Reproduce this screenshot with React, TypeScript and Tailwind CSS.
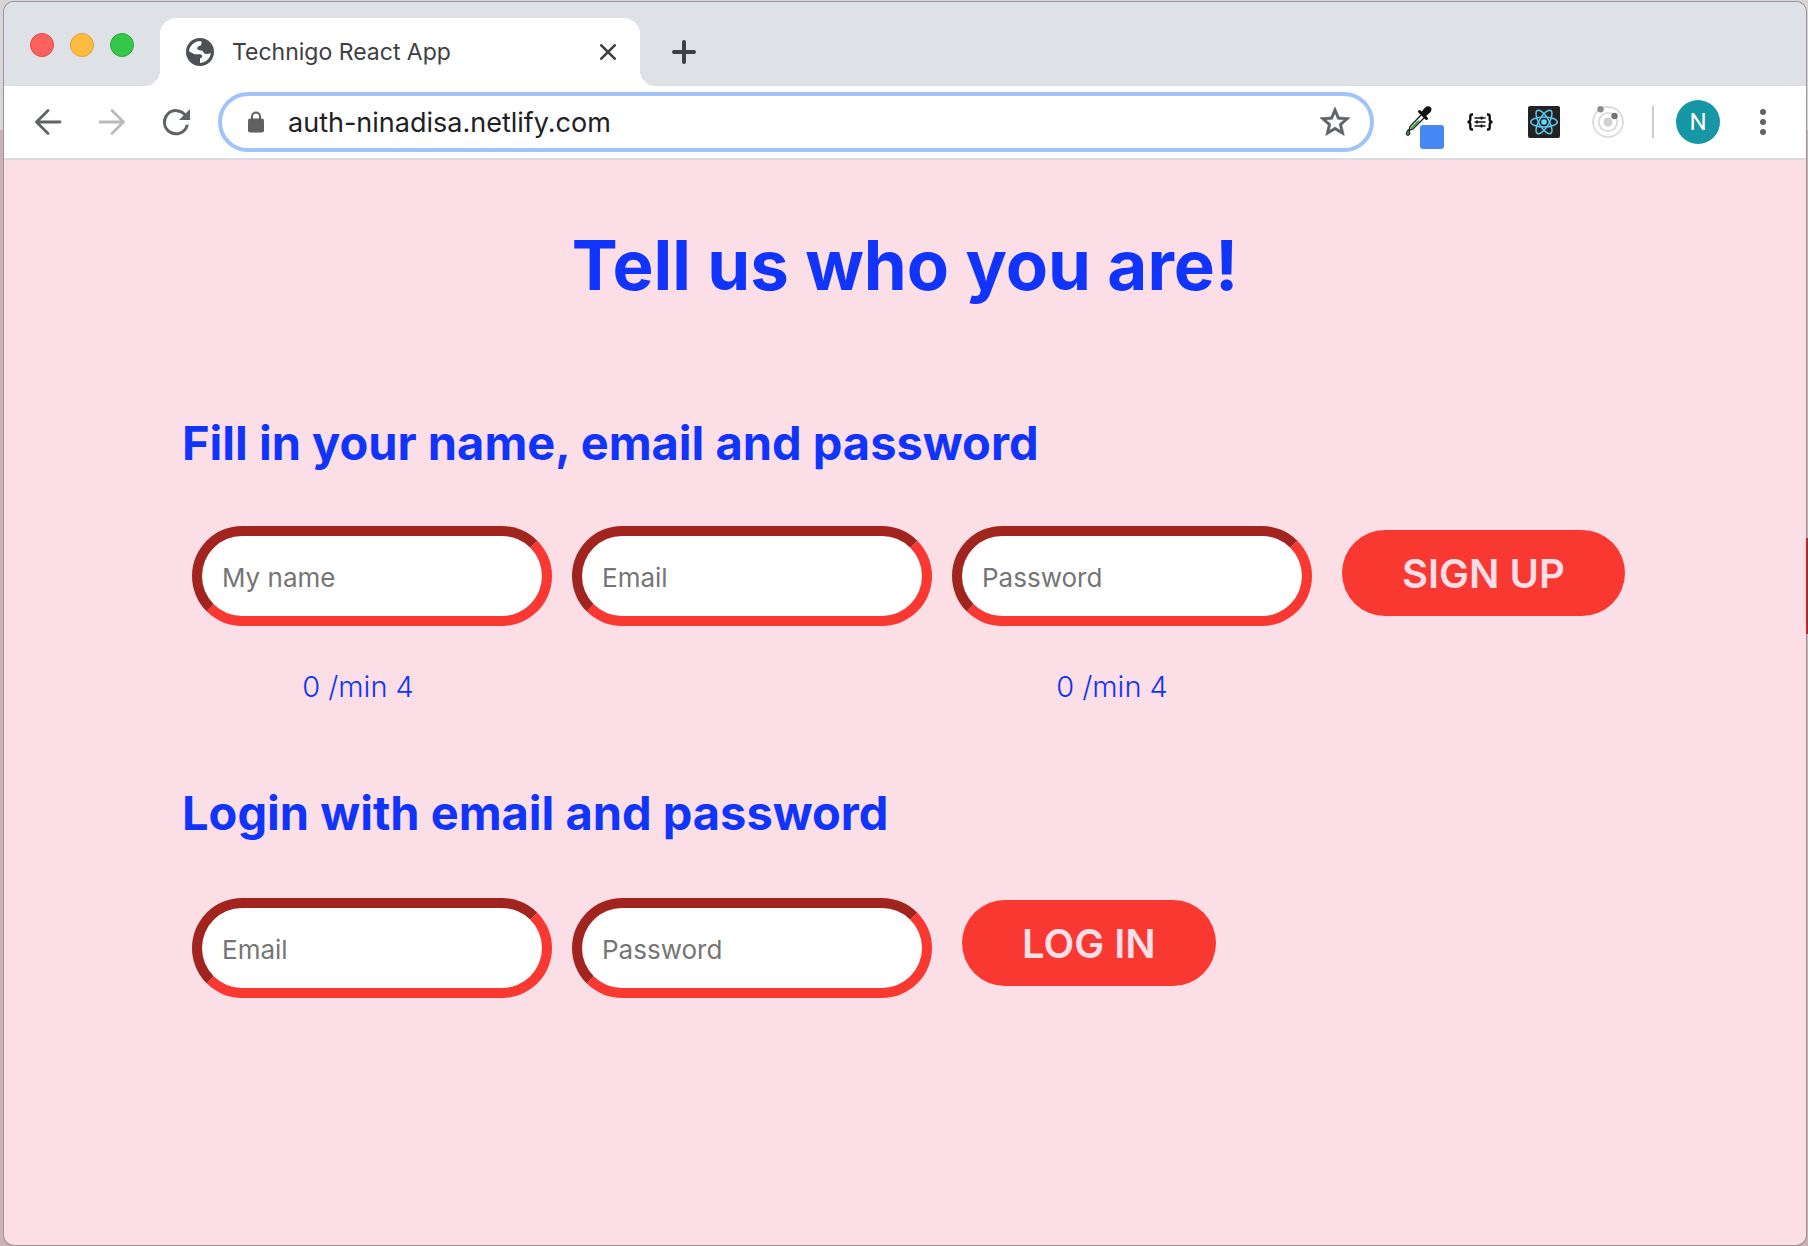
import React from "react";

const font = "font-['Inter','Noto_Sans',sans-serif]";

function Globe() {
  return (
    <svg viewBox="0 0 28 28" className="size-7 shrink-0" aria-hidden="true">
      <circle cx="14" cy="14" r="14" fill="#4d5156" />
      <path
        fill="#fff"
        d="M3.200 11.500Q5 5.500 11.500 3.200H15.500V5.500Q15.300 8 12.800 8.200 11 8.500 11.200 10.500 11.500 12 13.500 12.300 17 12.200 17.500 14.500 18.500 16.200 21 16 23.500 15.800 24.900 15 24 21.500 17.500 24.300L14 24.900V20.500Q16 20 16.300 18.200 16.200 16.200 14 16.200H8.500L3.200 13.500Z"
      />
    </svg>
  );
}

function ReactLogo() {
  return (
    <svg viewBox="0 0 32 32" className="size-8" aria-hidden="true">
      <rect width="32" height="32" rx="2" fill="#222" />
      <circle cx="16" cy="16" r="2.8" fill="#61dafb" />
      <g fill="none" stroke="#5cc8ee" strokeWidth="1.5">
        <ellipse cx="16" cy="16" rx="13.3" ry="5" />
        <ellipse cx="16" cy="16" rx="13.3" ry="5" transform="rotate(60 16 16)" />
        <ellipse cx="16" cy="16" rx="13.3" ry="5" transform="rotate(120 16 16)" />
      </g>
    </svg>
  );
}

function Dropper() {
  return (
    <svg viewBox="0 0 40 44" className="h-11 w-10" aria-hidden="true">
      <path d="M18 9 6 21.500 5 25.500 9 24 21 12Z" fill="#f4f4f4" stroke="#222" strokeWidth="1.400" />
      <path d="M14 15.500 7 22.500 6.500 24.500 9 23.500 16.500 16Z" fill="#3f9a48" />
      <path d="m15.500 6.500 7 7" stroke="#111" strokeWidth="3" strokeLinecap="round" />
      <path d="M17.500 7 21 2.500Q24.500 0 27 2.500 28.500 5.500 25.500 8L21.500 11.500Z" fill="#111" />
      <path d="M4.200 24.500Q6.700 27.500 5.700 29.500 4 31.500 2.200 29.500 1.700 27.500 4.200 24.500Z" fill="#3f8a48" stroke="#222" />
      <rect x="16" y="20" width="24" height="24" rx="3" fill="#4688f1" />
    </svg>
  );
}

function Braces() {
  return (
    <svg viewBox="0 0 28 18" className="h-[18px] w-7" fill="none" stroke="#111" strokeWidth="2.400" aria-hidden="true">
      <path d="M7 1.500H6Q4.300 1.500 4.300 3.500V6.500Q4.300 9 1.500 9 4.300 9 4.300 11.500V14.500Q4.300 16.500 6 16.500H7M21 1.500H22Q23.700 1.500 23.700 3.500V6.500Q23.700 9 26.500 9 23.700 9 23.700 11.500V14.500Q23.700 16.500 22 16.500H21" />
      <path d="M8.500 5H19.500M8.500 9H19.500M8.500 13H19.500" strokeWidth="1.600" />
      <path d="M15.500 3.500V6.500M11 7.500V10.500M15.500 11.500V14.500" strokeWidth="1.800" />
    </svg>
  );
}

function Orbit() {
  return (
    <svg viewBox="0 0 32 32" className="size-8" aria-hidden="true">
      <g fill="none" stroke="#dcdcdc" strokeWidth="1.800">
        <circle cx="16" cy="16" r="15" />
        <circle cx="16" cy="16" r="9.200" />
      </g>
      <circle cx="16" cy="16" r="4.500" fill="#d0d0d0" />
      <circle cx="8.500" cy="3.300" r="3.200" fill="#8c8c8c" />
      <circle cx="22.500" cy="10" r="3.200" fill="#747474" />
    </svg>
  );
}

function TabStrip() {
  return (
    <div className="flex h-[84px] items-end bg-[#dee1e6]">
      <div className="flex h-[84px] w-[156px] items-center gap-4 pt-0.5 pl-[26px]">
        <button aria-label="Close window" className="size-6 rounded-full border border-[#e2463f] bg-[#fc615d]" />
        <button aria-label="Minimise window" className="size-6 rounded-full border border-[#e0a033] bg-[#fdbc40]" />
        <button aria-label="Zoom window" className="size-6 rounded-full border border-[#27aa35] bg-[#34c84a]" />
      </div>
      <div className="relative flex h-[68px] w-[480px] items-center rounded-t-2xl bg-white pr-6 pl-[26px]">
        <span className="absolute bottom-0 -left-4 size-4 bg-[radial-gradient(circle_at_0_0,#dee1e6_16px,#fff_16px)]" />
        <span className="absolute -right-4 bottom-0 size-4 bg-[radial-gradient(circle_at_100%_0,#dee1e6_16px,#fff_16px)]" />
        <Globe />
        <span className="ml-[18px] flex-1 text-[23px] text-[#3c4043]">Technigo React App</span>
        <button aria-label="Close tab">
          <svg viewBox="0 0 16 16" className="size-4" stroke="#3c4043" strokeWidth="2.600" strokeLinecap="round" aria-hidden="true">
            <path d="m1.300 1.300 13.400 13.400M14.700 1.300 1.300 14.700" />
          </svg>
        </button>
      </div>
      <button aria-label="New tab" className="mb-[22px] ml-8">
        <svg viewBox="0 0 24 24" className="size-6" stroke="#3c4043" strokeWidth="4" strokeLinecap="round" aria-hidden="true">
          <path d="M12 2v20M2 12h20" />
        </svg>
      </button>
    </div>
  );
}

function Toolbar() {
  return (
    <div className="flex h-[74px] items-center border-b-2 border-[#dadce0] bg-white pr-10 pl-[30px]">
      <button aria-label="Back">
        <svg viewBox="0 0 28 28" className="size-7" fill="none" stroke="#5f6368" strokeWidth="2.800" strokeLinecap="round" strokeLinejoin="round" aria-hidden="true">
          <path d="M26 14H2.500M14 2.500 2.500 14 14 25.500" />
        </svg>
      </button>
      <button aria-label="Forward" className="ml-9">
        <svg viewBox="0 0 28 28" className="size-7" fill="none" stroke="#bababa" strokeWidth="2.800" strokeLinecap="round" strokeLinejoin="round" aria-hidden="true">
          <path d="M2 14h23.500M14 2.500 25.500 14 14 25.500" />
        </svg>
      </button>
      <button aria-label="Reload" className="ml-9">
        <svg viewBox="0 0 28 28" className="size-7" fill="none" stroke="#5f6368" strokeWidth="3" aria-hidden="true">
          <path d="M23.500 7.500A11.600 11.600 0 1 0 25 18" strokeLinecap="round" />
          <path d="M28 1V12H17Z" fill="#5f6368" stroke="none" />
        </svg>
      </button>
      <div className="ml-7 flex h-[60px] min-w-0 flex-1 items-center rounded-full border-4 border-[#a0c3f9] bg-white pr-5 pl-[26px]">
        <svg viewBox="0 0 16 22" className="h-[22px] w-4 shrink-0" aria-hidden="true">
          <rect y="7.500" width="16" height="14" rx="2" fill="#5f6061" />
          <path d="M4 9V5.500a4 4 0 0 1 8 0V9" fill="none" stroke="#5f6061" strokeWidth="2" />
        </svg>
        <input
          aria-label="Address"
          defaultValue="auth-ninadisa.netlify.com"
          className="ml-6 min-w-0 flex-1 bg-transparent pt-0.5 text-[27px] text-[#202124] outline-none"
        />
        <button aria-label="Bookmark this page">
          <svg viewBox="2 2 20 20" className="size-[30px]" fill="#5f6368" stroke="#5f6368" strokeWidth="0.400" aria-hidden="true">
            <path d="m22 9.240-7.190-.62L12 2 9.190 8.630 2 9.240l5.460 4.730L5.820 21 12 17.270 18.180 21l-1.630-7.030zM12 15.400l-3.760 2.270 1-4.280-3.320-2.880 4.380-.38L12 6.100l1.710 4.040 4.380.38-3.320 2.880 1 4.280z" />
          </svg>
        </button>
      </div>
      <button aria-label="Colour picker" className="ml-[30px] pt-2.5"><Dropper /></button>
      <button aria-label="JSON viewer" className="ml-[22px]"><Braces /></button>
      <button aria-label="React tools" className="ml-[34px]"><ReactLogo /></button>
      <button aria-label="Orbit" className="ml-8"><Orbit /></button>
      <span className="ml-7 h-8 w-0.5 bg-[#ccc]" />
      <button aria-label="Profile" className="ml-[22px] size-11 rounded-full bg-[#1697a6] font-['Roboto',sans-serif] text-2xl text-white">N</button>
      <button aria-label="Menu" className="ml-10 flex flex-col gap-1">
        <span className="size-1.5 rounded-full bg-[#5f6368]" />
        <span className="size-1.5 rounded-full bg-[#5f6368]" />
        <span className="size-1.5 rounded-full bg-[#5f6368]" />
      </button>
    </div>
  );
}

function Field({ label, type, children }: { label: string; type: string; children?: React.ReactNode }) {
  return (
    <div className="w-[360px]">
      <input
        type={type}
        aria-label={label}
        placeholder={label}
        className="h-[100px] w-full rounded-full border-10 border-t-[#a1241f] border-r-[#f93832] border-b-[#f93832] border-l-[#a1241f] bg-white px-5 pt-0.5 text-[26px] text-black outline-none placeholder:text-[#757575]"
      />
      {children}
    </div>
  );
}

function Submit({ children }: { children: string }) {
  return (
    <button className="ml-2.5 h-[86px] rounded-full bg-[#f93832] px-[60px] pt-0.5 text-[40px] font-semibold text-[#fcdee6]">
      {children}
    </button>
  );
}

export default function App() {
  return (
    <div className={`relative flex min-h-screen flex-col bg-[linear-gradient(#d6d6d6_130px,#cbb1b8_130px)] pt-0.5 pr-0.5 pb-px pl-1 ${font}`}>
      <span className="absolute top-[538px] right-0 h-24 w-0.5 bg-[#b52a28]" />
      <div className="flex flex-1 flex-col overflow-hidden rounded-[10px] bg-[#fcdee6] shadow-[0_0_0_1px_#9d9499]">
        <TabStrip />
        <Toolbar />
        <main className="flex-1 text-[#1034fb]">
          <h1 className="pt-[60px] text-center text-[69px] leading-[90px] font-bold">Tell us who you are!</h1>
          <div className="pl-[178px]">
            <form onSubmit={(e) => e.preventDefault()}>
              <h2 className="pt-[101px] text-[47px] leading-[64px] font-bold">Fill in your name, email and password</h2>
              <div className="mt-[51px] flex items-start gap-5 pl-2.5">
                <Field label="My name" type="text">
                  <p className="mt-[39px] mb-px pr-7 text-center text-[29px] leading-[44px] font-light">0 /min 4</p>
                </Field>
                <Field label="Email" type="email" />
                <Field label="Password" type="password">
                  <p className="mt-[39px] mb-px pr-10 text-center text-[29px] leading-[44px] font-light">0 /min 4</p>
                </Field>
                <div className="pt-1"><Submit>SIGN UP</Submit></div>
              </div>
            </form>
            <form onSubmit={(e) => e.preventDefault()}>
              <h2 className="pt-[71px] text-[47px] leading-[64px] font-bold">Login with email and password</h2>
              <div className="mt-[53px] flex items-start gap-5 pl-2.5">
                <Field label="Email" type="email" />
                <Field label="Password" type="password" />
                <div className="pt-0.5"><Submit>LOG IN</Submit></div>
              </div>
            </form>
          </div>
        </main>
      </div>
    </div>
  );
}
